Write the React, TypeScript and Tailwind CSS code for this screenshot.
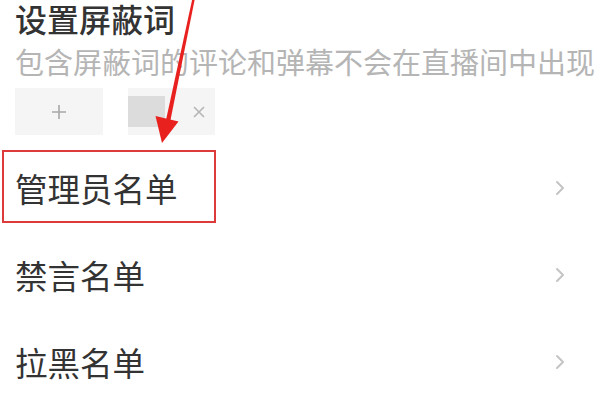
import React from "react";

const font = { fontFamily: '"Noto Sans CJK SC", "Noto Sans", sans-serif' };

function Chevron() {
  return (
    <svg width="12" height="18" viewBox="0 0 12 18" className="mr-[34px]">
      <polyline points="3,3 9,9 3,15" fill="none" stroke="#c4c4c4" strokeWidth="2" strokeLinecap="round" strokeLinejoin="round" />
    </svg>
  );
}

function Row({ label }: { label: string }) {
  return (
    <div className="flex h-[87px] items-center justify-between pl-[15px]">
      <span className="text-[32.5px] leading-[34px] text-[#333333]">{label}</span>
      <Chevron />
    </div>
  );
}

export default function App() {
  return (
    <div className="relative h-[395px] w-[600px] overflow-hidden bg-white" style={font}>
      <div className="px-[15px] pt-[1px]">
        <div className="text-[32px] leading-[34px] font-medium text-[#333333]">设置屏蔽词</div>
        <div className="mt-[11px] whitespace-nowrap text-[29px] leading-[30px] text-[#b5b5b5]">
          包含屏蔽词的评论和弹幕不会在直播间中出现
        </div>
        <div className="mt-[12px] flex gap-[25px]">
          <div className="flex h-[47px] w-[88px] items-center justify-center bg-[#f5f5f5]">
            <svg width="16" height="16" viewBox="0 0 16 16">
              <path d="M8 1v14M1 8h14" stroke="#a8a8a8" strokeWidth="1.6" />
            </svg>
          </div>
          <div className="flex h-[47px] w-[87px] items-center bg-[#f5f5f5]">
            <div className="h-[31px] w-[37px] bg-[#dcdcdc]" />
            <svg width="14" height="14" viewBox="0 0 14 14" className="ml-[27px]">
              <path d="M2 2l10 10M12 2L2 12" stroke="#b5b5b5" strokeWidth="1.6" />
            </svg>
          </div>
        </div>
      </div>
      <div className="mt-[9px]">
        <Row label="管理员名单" />
        <Row label="禁言名单" />
        <Row label="拉黑名单" />
      </div>

      {/* annotation box */}
      <div className="absolute left-[2px] top-[150px] h-[73px] w-[214px] border-2 border-[#dd3b3b]" />

      {/* annotation arrow */}
      <svg className="absolute left-0 top-0" width="600" height="395" viewBox="0 0 600 395">
        <path d="M192.5 -2 L195 -2 L170.5 120 L166 120 Z" fill="#e8211f" />
        <path d="M162 143 L155.5 116 L178.5 121.5 Z" fill="#e8211f" />
      </svg>
    </div>
  );
}
